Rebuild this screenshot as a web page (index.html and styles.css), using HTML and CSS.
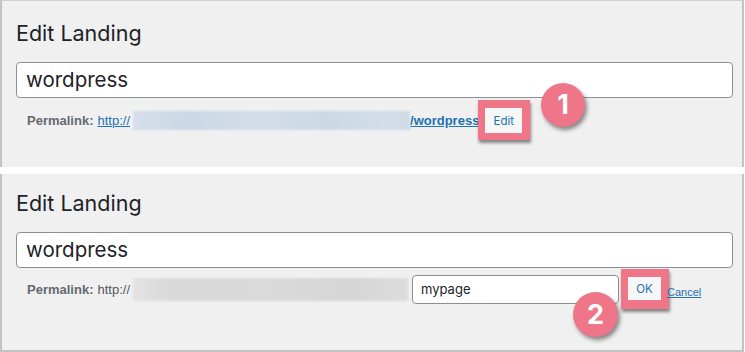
FILE: index.html
```html
<!DOCTYPE html>
<html lang="en">
<head>
<meta charset="utf-8">
<title>Edit Landing</title>
<link rel="stylesheet" href="styles.css">
</head>
<body>
<div class="page">
  <section class="panel panel-top">
    <h1 class="title">Edit Landing</h1>
    <div class="title-input">wordpress</div>
    <div class="permalink">
      <span class="label">Permalink:</span>
      <a class="link" href="#">http://</a>
      <span class="blur blur-blue"></span>
      <a class="link link-bold" href="#">/wordpress</a>
      <span class="hl"><span class="btn">Edit</span></span>
    </div>
    <span class="badge badge-1">1</span>
  </section>
  <section class="panel panel-bottom">
    <h1 class="title">Edit Landing</h1>
    <div class="title-input">wordpress</div>
    <div class="permalink">
      <span class="label">Permalink:</span>
      <span class="plain">http://</span>
      <span class="blur blur-gray"></span>
      <span class="slug-input">mypage</span>
      <span class="hl hl-ok"><span class="btn btn-ok">OK</span></span>
      <a class="cancel" href="#">Cancel</a>
    </div>
    <span class="badge badge-2">2</span>
  </section>
</div>
</body>
</html>
```
FILE: styles.css
```css
html, body {
  margin: 0;
  padding: 0;
  background: #ffffff;
}
body {
  font-family: "Inter", "Liberation Sans", sans-serif;
  color: #1d2327;
}
.page {
  width: 745px;
  height: 352px;
  display: flex;
  flex-direction: column;
  gap: 7px;
}
.panel {
  position: relative;
  box-sizing: border-box;
  width: 744px;
  background: #f0f0f1;
  border-left: 2px solid #c3c3c3;
  border-right: 2px solid #c3c3c3;
  padding-left: 14px;
  padding-right: 9px;
  display: flex;
  flex-direction: column;
}
.panel-top {
  height: 167px;
  border-top: 1px solid #cfcfcf;
  padding-top: 18px;
}
.panel-bottom {
  height: 178px;
  border-bottom: 2px solid #c3c3c3;
  padding-top: 15px;
}
.title {
  margin: 0;
  font-size: 21.5px;
  line-height: 28px;
  font-weight: 400;
  color: #1d2327;
}
.title-input {
  margin-top: 15px;
  box-sizing: border-box;
  height: 36px;
  border: 1px solid #8c8f94;
  border-radius: 4px;
  background: #ffffff;
  padding: 0 9px;
  font-size: 20.5px;
  line-height: 34px;
  color: #1d2327;
}
.permalink {
  margin-top: 2px;
  height: 40px;
  display: flex;
  align-items: center;
  padding-left: 11px;
  font-family: "Liberation Sans", Arial, sans-serif;
  font-size: 13px;
  color: #646970;
}
.panel-bottom .permalink {
  margin-top: 1px;
}
.label {
  font-weight: 700;
  margin-right: 4px;
}
.link {
  color: #2271b1;
  text-decoration: underline;
}
.link-bold {
  font-weight: 700;
}
.plain {
  color: #50575e;
}
.blur {
  display: inline-block;
  width: 277px;
  margin-left: 3px;
  filter: blur(1px);
}
.blur-blue {
  height: 19px;
  background: linear-gradient(90deg, #d5dfe9 0%, #cbd8e5 20%, #d3dde8 45%, #ccd9e5 70%, #d2dde8 90%, #cfdbe6 100%);
}
.blur-gray {
  width: 275px;
  height: 23px;
  background: linear-gradient(90deg, #e3e3e3 0%, #d9d9d9 15%, #dadada 50%, #d6d6d6 80%, #dcdcdc 100%);
}
.hl {
  display: inline-flex;
  box-sizing: border-box;
  height: 40px;
  width: 52px;
  margin-left: -1px;
  border: 7px solid #ee7688;
  border-right-width: 8px;
  border-top-width: 8px;
  box-shadow: 1px 3px 3px rgba(0, 0, 0, 0.45);
  background: #f6f7f7;
  align-items: center;
  justify-content: center;
}
.btn {
  font-family: "Inter", "Liberation Sans", sans-serif;
  font-size: 11.5px;
  color: #2271b1;
  line-height: 16px;
}
.slug-input {
  box-sizing: border-box;
  margin-left: 4px;
  width: 207px;
  height: 29px;
  border: 1px solid #8c8f94;
  border-radius: 4px;
  background: #ffffff;
  padding: 0 8px;
  font-family: "Inter", "Liberation Sans", sans-serif;
  font-size: 13px;
  line-height: 27px;
  color: #1d2327;
}
.hl-ok {
  width: 48px;
  margin-left: 2px;
  border-width: 8px 8px 9px 7px;
}
.cancel {
  margin-left: -2px;
  margin-top: 5px;
  font-size: 11px;
  color: #2271b1;
  text-decoration: underline;
}
.badge {
  position: absolute;
  width: 44px;
  height: 44px;
  border-radius: 50%;
  background: #ee7688;
  color: #ffffff;
  font-size: 27px;
  font-weight: 700;
  line-height: 44px;
  text-align: center;
  box-shadow: 2px 3px 4px rgba(0, 0, 0, 0.45);
}
.badge-1 {
  left: 539px;
  top: 82px;
}
.badge-2 {
  left: 571px;
  top: 118px;
  width: 45px;
  height: 45px;
  line-height: 45px;
}
```
